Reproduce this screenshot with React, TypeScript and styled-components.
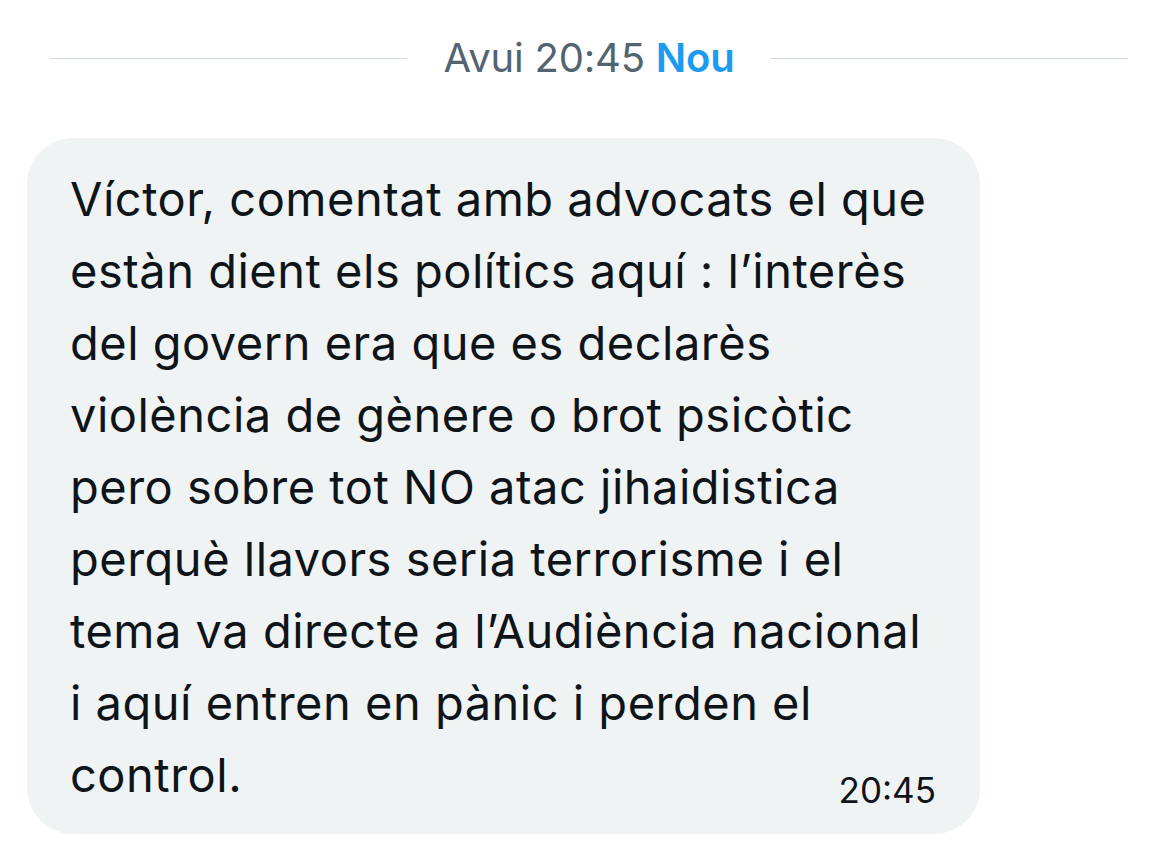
import React from "react";
import styled, { createGlobalStyle } from "styled-components";

const Global = createGlobalStyle`
  html, body { margin: 0; padding: 0; background: #ffffff; }
  body { font-family: Inter, "Noto Sans", sans-serif; -webkit-font-smoothing: antialiased; }
`;

const Page = styled.div`
  width: 1169px;
  height: 856px;
  box-sizing: border-box;
  padding-top: 34px;
  display: flex;
  flex-direction: column;
`;

const DateRow = styled.div`
  display: flex;
  align-items: center;
  gap: 37px;
  margin: 0 41px 0 50px;
  height: 48px;
`;

const Rule = styled.div`
  flex: 1;
  height: 1px;
  background: #cfd9de;
`;

const DateText = styled.div`
  font-size: 40px;
  line-height: 48px;
  color: #536471;
  white-space: nowrap;
  letter-spacing: -0.2px;
`;

const NewTag = styled.span`
  color: #1d9bf0;
  font-weight: 600;
`;

const Bubble = styled.div`
  margin: 56px 0 0 27px;
  width: 953px;
  height: 696px;
  box-sizing: border-box;
  background: #eff3f4;
  border-radius: 46px;
  padding: 25px 44px 0 43px;
  color: #0f1419;
`;

const Line = styled.div`
  font-size: 47px;
  line-height: 72px;
  height: 72px;
  white-space: nowrap;
  letter-spacing: 0.5px;
`;

const LastLine = styled(Line)`
  display: flex;
  justify-content: space-between;
  align-items: flex-end;
`;

const Time = styled.span`
  font-size: 35px;
  line-height: 1.21;
  letter-spacing: 0;
`;

const lines = [
  "Víctor, comentat amb advocats el que",
  "estàn dient els polítics aquí : l’interès",
  "del govern era que es declarès",
  "violència de gènere o brot psicòtic",
  "pero sobre tot NO atac jihaidistica",
  "perquè llavors seria terrorisme i el",
  "tema va directe a l’Audiència nacional",
  "i aquí entren en pànic i perden el",
];

export default function App() {
  return (
    <>
      <Global />
      <Page>
        <DateRow>
          <Rule />
          <DateText>
            Avui 20:45 <NewTag>Nou</NewTag>
          </DateText>
          <Rule />
        </DateRow>
        <Bubble>
          {lines.map((l) => (
            <Line key={l}>{l}</Line>
          ))}
          <LastLine>
            <span>control.</span>
            <Time>20:45</Time>
          </LastLine>
        </Bubble>
      </Page>
    </>
  );
}
